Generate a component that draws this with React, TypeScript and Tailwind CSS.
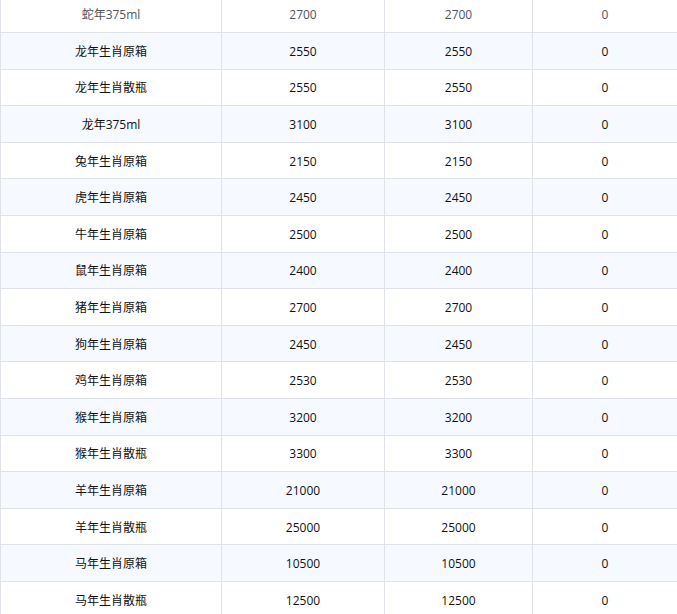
const rows: [string, number, number, number][] = [
  ["蛇年375ml", 2700, 2700, 0],
  ["龙年生肖原箱", 2550, 2550, 0],
  ["龙年生肖散瓶", 2550, 2550, 0],
  ["龙年375ml", 3100, 3100, 0],
  ["兔年生肖原箱", 2150, 2150, 0],
  ["虎年生肖原箱", 2450, 2450, 0],
  ["牛年生肖原箱", 2500, 2500, 0],
  ["鼠年生肖原箱", 2400, 2400, 0],
  ["猪年生肖原箱", 2700, 2700, 0],
  ["狗年生肖原箱", 2450, 2450, 0],
  ["鸡年生肖原箱", 2530, 2530, 0],
  ["猴年生肖原箱", 3200, 3200, 0],
  ["猴年生肖散瓶", 3300, 3300, 0],
  ["羊年生肖原箱", 21000, 21000, 0],
  ["羊年生肖散瓶", 25000, 25000, 0],
  ["马年生肖原箱", 10500, 10500, 0],
  ["马年生肖散瓶", 12500, 12500, 0],
];

export default function App() {
  return (
    <div className="h-[614px] w-[677px] overflow-hidden bg-white font-['Open_Sans','Noto_Sans_CJK_SC',sans-serif] text-[12px]">
      <div className="-mt-[3.6px]">
        {rows.map((r, i) => (
          <div
            key={i}
            className={
              "grid h-[36.6px] grid-cols-[221px_163px_148px_1fr] border-b border-[#dfe2e8] " +
              (i % 2 === 1 ? "bg-[#f6f9ff]" : "bg-white") +
              (i === 0 ? " text-[#4f545c]" : " text-[#111111]")
            }
          >
            {r.map((c, j) => (
              <div
                key={j}
                className="flex items-center justify-center border-l border-[#dfe2e8] pt-[2px]"
              >
                {c}
              </div>
            ))}
          </div>
        ))}
      </div>
    </div>
  );
}
